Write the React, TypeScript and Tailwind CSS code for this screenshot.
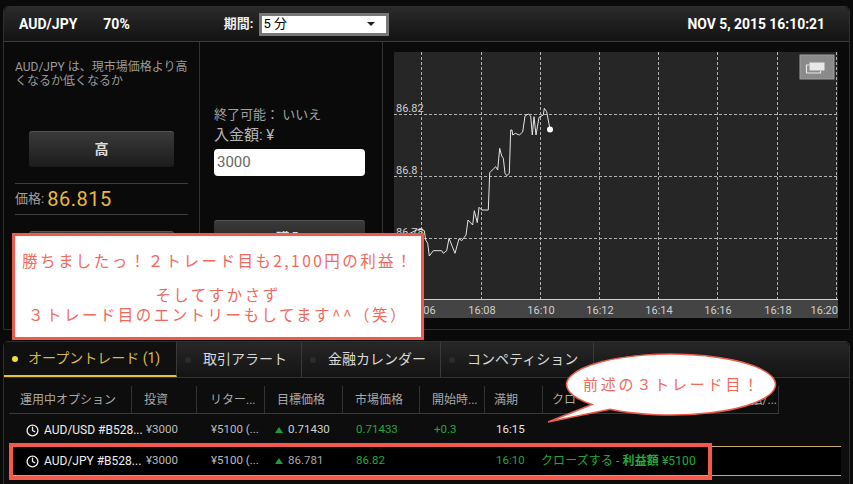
import React from 'react';
import { Clock } from 'lucide-react';

const font = { fontFamily: 'Roboto, "Noto Sans CJK JP", sans-serif' };

const linePoints =
  '60,700 80,690 95,688 103,692 107,720 113,730 118,768 130,752 155,752 160,760 170,752 177,715 185,735 195,760 207,716 215,722 228,705 234,660 248,675 253,632 262,668 267,622 275,630 295,630 299,518 312,505 317,500 323,510 329,445 335,468 340,475 345,520 350,527 358,520 362,390 366,390 368,405 376,400 388,405 398,396 405,348 415,342 422,348 427,405 432,350 438,405 447,352 460,345 463,325 470,335 480,388'
    .split(' ')
    .map((p) => {
      const [x, y] = p.split(',').map(Number);
      return `${(x / 3 - 4).toFixed(1)},${(y / 3 - 52).toFixed(1)}`;
    })
    .join(' ');

const gridX = [27.5, 87.5, 146.5, 205.5, 264.5, 323.5, 383.5, 442.5];
const gridY = [62, 124, 186];
const timeLabels = [
  ['16:06', 28],
  ['16:08', 88],
  ['16:10', 147],
  ['16:12', 206],
  ['16:14', 265],
  ['16:16', 324],
  ['16:18', 384],
  ['16:20', 444],
] as const;

const Chart = () => (
  <svg width="444" height="266" viewBox="0 0 444 266" className="block shrink-0">
    <rect width="444" height="266" fill="#262626" />
    <rect y="247" width="444" height="19" fill="#444444" />
    {gridX.map((x) => (
      <line key={x} x1={x} x2={x} y1="0" y2="247" stroke="#b0b0b0" strokeDasharray="3 2" />
    ))}
    {gridY.map((y) => (
      <line key={y} x1="0" x2="443" y1={y + 0.5} y2={y + 0.5} stroke="#b0b0b0" strokeDasharray="3 2" />
    ))}
    <line x1="0" x2="444" y1="247.5" y2="247.5" stroke="#cfcfcf" />
    {[['86.82', 60], ['86.8', 122], ['86.78', 184]].map(([t, y]) => (
      <text key={t} x="2" y={y} fill="#d0d0d0" fontSize="11" style={font}>
        {t}
      </text>
    ))}
    {timeLabels.map(([t, x]) => (
      <text key={t} x={x} y="262" fill="#d0d0d0" fontSize="11" textAnchor={t === '16:20' ? 'end' : 'middle'} style={font}>
        {t}
      </text>
    ))}
    <polyline points={linePoints} fill="none" stroke="#e4e4e4" strokeWidth="1" />
    <circle cx="156" cy="77.5" r="3" fill="#ffffff" />
    <rect x="406" y="3" width="34" height="24" fill="#8a8a8a" stroke="#a0a0a0" />
    <rect x="415" y="10" width="16" height="9" fill="#e8e8e8" stroke="#8a8a8a" />
    <path d="M415 13h-2.5v8h14v-2" fill="none" stroke="#e8e8e8" strokeWidth="1.2" />
  </svg>
);

const Tab = ({ label, active, width }: { label: string; active?: boolean; width: string }) => (
  <div
    className={`flex items-center h-full border-r border-[#3a3a3a] text-[14px] ${width} ${
      active ? 'gap-[10px] pl-[8px] text-[#d9b84a] border-b-2 border-b-[#e6c23e] bg-[#101010]' : 'gap-[12px] pl-[8px] text-[#d8d8d8]'
    }`}
  >
    <span className={`w-[6px] h-[6px] rounded-full shrink-0 ${active ? 'bg-[#f2dc3c]' : 'bg-[#2c2c2c]'}`} />
    <span className="whitespace-nowrap">{label}</span>
  </div>
);

const headers = [
  ['運用中オプション', 'w-[123px] pl-[11px]'],
  ['投資', 'w-[65px] pl-[12px]'],
  ['リター...', 'w-[68px] pl-[13px]'],
  ['目標価格', 'w-[78px] pl-[12px]'],
  ['市場価格', 'w-[77px] pl-[12px]'],
  ['開始時...', 'w-[65px] pl-[12px]'],
  ['満期', 'w-[58px] pl-[9px]'],
  ['クローズ', 'w-[176px] pl-[9px]'],
  ['支払/...', 'w-[60px] justify-end pr-[1px]'],
];

const UpArrow = () => (
  <svg width="8" height="6" viewBox="0 0 8 6" className="mr-[5px] shrink-0">
    <path d="M4 0l4 6H0z" fill="#1f9a3a" />
  </svg>
);

const Row = ({
  pair,
  target,
  market,
  start,
  expiry,
  highlight,
}: {
  pair: string;
  target: string;
  market: string;
  start?: string;
  expiry: string;
  highlight?: boolean;
}) => (
  <div
    className={`flex items-center text-[11.5px] ${
      highlight ? 'h-[30px] bg-black border-y border-[#c9aa62]' : 'h-[32px] bg-[#0d0d0d]'
    }`}
  >
    <div className="w-[123px] pl-[17px] flex items-center gap-[5px] text-[#eeeeee] text-[12px] whitespace-nowrap">
      <Clock size={13} strokeWidth={2.4} className="shrink-0" />
      <span>{pair}</span>
    </div>
    <div className="w-[65px] pl-[14px] text-[#bdbdbd]">¥3000</div>
    <div className="w-[68px] pl-[14px] text-[#bdbdbd] whitespace-nowrap">¥5100 (...</div>
    <div className={`w-[78px] pl-[10px] flex items-center ${highlight ? 'text-[#a8a8a8]' : 'text-[#d0d0d0]'}`}>
      <UpArrow />
      {target}
    </div>
    <div className="w-[77px] pl-[13px] text-[#22a83f]">{market}</div>
    <div className="w-[65px] pl-[14px] text-[#22a83f]">{start}</div>
    <div className={`w-[46px] pl-[11px] ${highlight ? 'text-[#22a83f]' : 'text-[#e8e8e8]'}`}>{expiry}</div>
    {highlight && (
      <div className="pl-[10px] text-[12px] tracking-[0.1px] text-[#22a83f] whitespace-nowrap">
        クローズする - <span className="font-bold">利益額</span> ¥5100
      </div>
    )}
  </div>
);

export default function App() {
  return (
    <div className="relative w-[853px] h-[484px] overflow-hidden bg-[#0a0a0a] pt-[6px] px-[3px]" style={font}>
      {/* upper panel */}
      <div className="h-[324px] w-[847px] border border-[#2e2e2e] rounded-t-[5px] flex flex-col bg-[#0a0a0a]">
        <div className="h-[35px] shrink-0 flex items-center bg-gradient-to-b from-[#2b2b2b] to-[#131313] border-b border-[#3c3c3c] rounded-t-[5px] text-white font-bold text-[14px]">
          <span className="ml-[15px]">AUD/JPY</span>
          <span className="ml-[26px]">70%</span>
          <span className="ml-[94px] text-[13px] text-[#eeeeee]">期間:</span>
          <div className="ml-[6px] w-[130px] h-[23px] bg-white border-[3px] border-[#777777] flex items-center justify-between px-[1px] pr-[11px] text-black font-normal text-[13px]">
            <span>5 分</span>
            <span className="w-0 h-0 border-x-[4px] border-x-transparent border-t-[4px] border-t-[#222222]" />
          </div>
          <span className="ml-auto mr-[24px] text-[13.9px]">NOV 5, 2015 16:10:21</span>
        </div>
        <div className="flex flex-1 min-h-0">
          <div className="w-[196px] shrink-0 border-r border-[#333333] pl-[11px] pr-[10px] pt-[18px]">
            <p className="text-[12px] leading-[14px] text-[#9a9a9a]">AUD/JPY は、現市場価格より高くなるか低くなるか</p>
            <div className="ml-[14px] mr-[15px] mt-[43px] h-[36px] rounded-[3px] flex items-center justify-center bg-gradient-to-b from-[#3a3a3a] to-[#1c1c1c] border-t border-[#555555] text-[#dddddd] font-bold text-[14px]">
              高
            </div>
            <div className="mt-[16px] h-[32px] w-[173px] border-y border-[#3f3f3f] flex items-center text-[#a0a0a0] text-[13px]">
              価格:
              <span className="ml-[3px] text-[20px] text-[#e8b93c] tracking-[0.5px]">86.815</span>
            </div>
            <div className="ml-[14px] mr-[15px] mt-[16px] h-[36px] rounded-[3px] bg-gradient-to-b from-[#3a3a3a] to-[#1c1c1c] border-t border-[#555555]" />
          </div>
          <div className="w-[183px] shrink-0 border-r border-[#333333] pl-[14px] pr-[17px] pt-[63px]">
            <p className="text-[13px] leading-[20px] text-[#a0a0a0]">終了可能： いいえ</p>
            <p className="text-[15px] leading-[20px] text-[#b4b4b4]">入金額: ¥</p>
            <div className="mt-[4px] h-[27px] bg-white rounded-[4px] flex items-center pl-[3px] text-[#666666] text-[15px]">3000</div>
            <div className="mt-[44px] h-[36px] rounded-[3px] flex items-center justify-center bg-gradient-to-b from-[#3a3a3a] to-[#1c1c1c] border-t border-[#555555] text-[#dddddd] font-bold text-[14px]">
              購入
            </div>
          </div>
          <div className="pl-[11px] pt-[10px]">
            <Chart />
          </div>
        </div>
      </div>

      {/* lower panel */}
      <div className="mt-[11px] w-[847px] h-[150px] border border-[#2e2e2e] rounded-t-[5px] bg-[#0d0d0d]">
        <div className="h-[36px] flex items-center bg-gradient-to-b from-[#272727] to-[#141414] border-b border-[#333333] rounded-t-[5px]">
          <Tab label="オープントレード (1)" active width="w-[173px]" />
          <Tab label="取引アラート" width="w-[125px]" />
          <Tab label="金融カレンダー" width="w-[139px]" />
          <Tab label="コンペティション" width="w-[153px]" />
        </div>
        <div className="ml-[5px] w-[832px] pt-[8px]">
          <div className="flex w-[770px] h-[28px] border-b border-[#3a3a3a] text-[12px] text-[#a8a8a8]">
            {headers.map(([label, cls]) => (
              <div key={label} className={`${cls} flex items-center border-r border-[#333333] whitespace-nowrap`}>
                {label}
              </div>
            ))}
          </div>
          <Row pair="AUD/USD #B528..." target="0.71430" market="0.71433" start="+0.3" expiry="16:15" />
          <Row pair="AUD/JPY #B528..." target="86.781" market="86.82" expiry="16:10" highlight />
        </div>
      </div>

      {/* annotations */}
      <div className="absolute left-[12px] top-[233px] w-[412px] h-[107px] bg-white border-[3px] border-[#ee5a4c] flex flex-col items-center justify-center text-[#f2695c] text-[15.5px] leading-[20px] tracking-[2.45px] whitespace-nowrap" style={{ fontFamily: '"Noto Sans CJK JP", sans-serif' }}>
        <p>勝ちましたっ！２トレード目も2,100円の利益！</p>
        <p className="mt-[14px]">そしてすかさず</p>
        <p>３トレード目のエントリーもしてます^^（笑）</p>
      </div>

      <div className="absolute left-[9px] top-[443px] w-[703px] h-[37px] border-[4px] border-[#f5594b]" />

      <svg width="240" height="80" viewBox="0 0 240 80" className="absolute left-[545px] top-[350px]">
        <path d="M47 54.5A104.500 30.500 0 1 1 65 59.300L3 72Z" fill="#ffffff" stroke="#ee5a4c" strokeWidth="1.500" />
      </svg>
      <div className="absolute left-[583px] top-[374px] text-[#f2695c] text-[15px] leading-[20px] tracking-[2.8px] whitespace-nowrap" style={{ fontFamily: '"Noto Sans CJK JP", sans-serif' }}>
        前述の３トレード目！
      </div>
    </div>
  );
}
